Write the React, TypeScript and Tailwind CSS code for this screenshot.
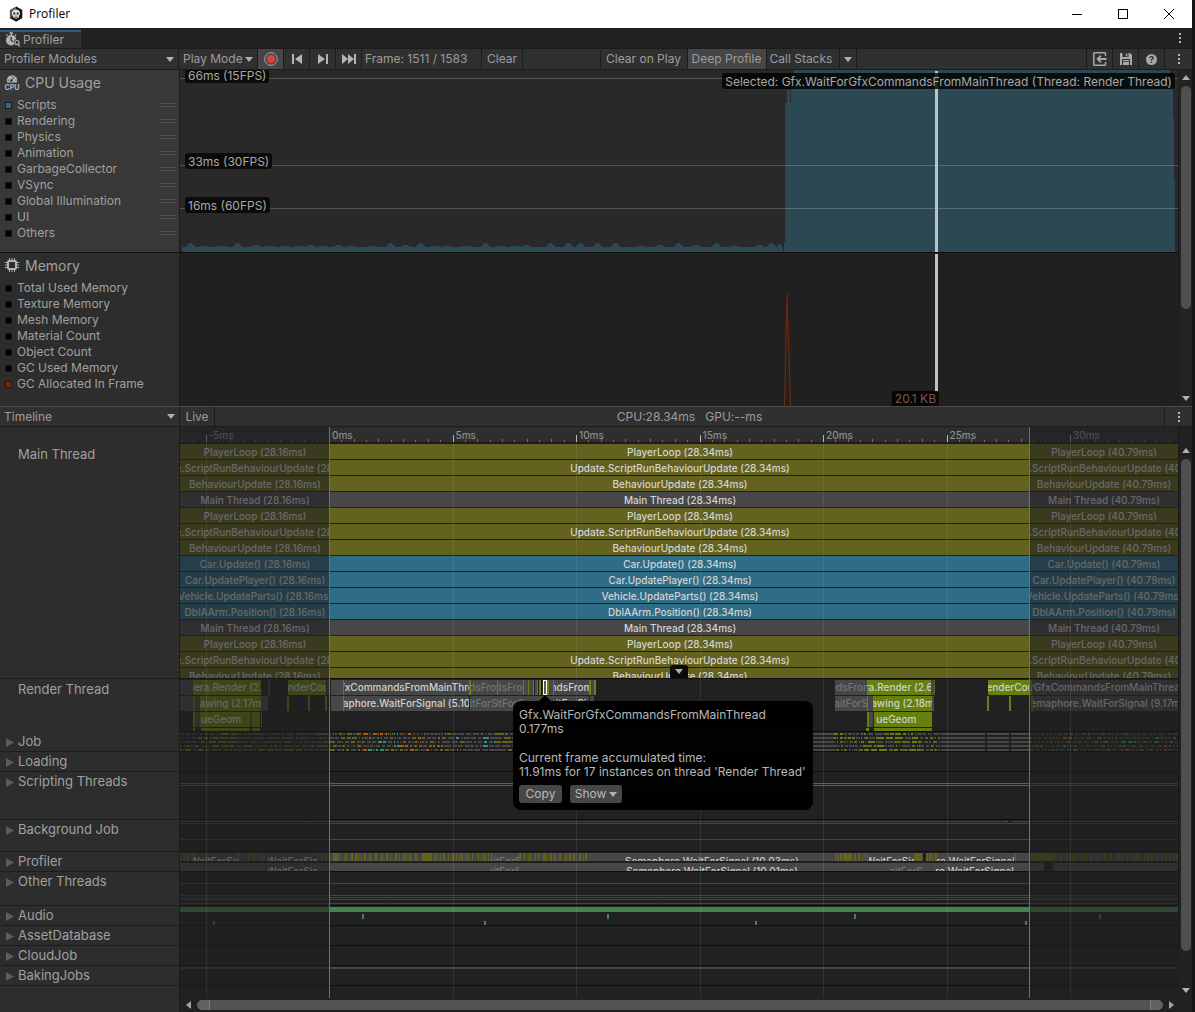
import React, { useState } from "react";

const TRACK_START = 180;
const TRACK_WIDTH = 998;
const FRAME_START = 329;
const FRAME_END = 1029;
const MS = 24.7;

const pct = (x: number) => `${((x - TRACK_START) / TRACK_WIDTH) * 100}%`;
const span = (from: number, to: number) => `${((to - from) / TRACK_WIDTH) * 100}%`;

const C = {
  olive: "#63621f",
  green: "#66800f",
  grey: "#474747",
  blue: "#2f6d87",
  orange: "#a85a14",
  teal: "#3c8a94",
  mint: "#2a9a62",
  audio: "#45834f",
  red: "#8a1838",
};

const cpuItems = ["Scripts", "Rendering", "Physics", "Animation", "GarbageCollector", "VSync", "Global Illumination", "UI", "Others"];
const memoryItems = ["Total Used Memory", "Texture Memory", "Mesh Memory", "Material Count", "Object Count", "GC Used Memory", "GC Allocated In Frame"];

const mainRows = [
  { name: "PlayerLoop", cls: "bg-[#63621f]" },
  { name: "Update.ScriptRunBehaviourUpdate", cls: "bg-[#63621f]" },
  { name: "BehaviourUpdate", cls: "bg-[#63621f]" },
  { name: "Main Thread", cls: "bg-[#474747]" },
  { name: "PlayerLoop", cls: "bg-[#63621f]" },
  { name: "Update.ScriptRunBehaviourUpdate", cls: "bg-[#63621f]" },
  { name: "BehaviourUpdate", cls: "bg-[#63621f]" },
  { name: "Car.Update()", cls: "bg-[#2f6d87]" },
  { name: "Car.UpdatePlayer()", cls: "bg-[#2f6d87]" },
  { name: "Vehicle.UpdateParts()", cls: "bg-[#2f6d87]" },
  { name: "DblAArm.Position()", cls: "bg-[#2f6d87]" },
  { name: "Main Thread", cls: "bg-[#474747]" },
  { name: "PlayerLoop", cls: "bg-[#63621f]" },
  { name: "Update.ScriptRunBehaviourUpdate", cls: "bg-[#63621f]" },
  { name: "BehaviourUpdate", cls: "bg-[#63621f]" },
];

interface Sample {
  from: number;
  to: number;
  color: string;
  label?: string;
  faded?: boolean;
}

const renderRows: Sample[][] = [
  [
    { from: 180, to: 193, color: C.grey },
    { from: 193, to: 261, color: C.green, label: "Camera.Render (2.77m" },
    { from: 268, to: 270, color: C.grey },
    { from: 288, to: 326, color: C.green, label: "RenderCount" },
    { from: 327, to: 329, color: C.grey },
    { from: 331, to: 343, color: C.grey },
    { from: 343, to: 344, color: C.green },
    { from: 344, to: 469, color: C.grey, label: "GfxCommandsFromMainThrea" },
    { from: 469, to: 471, color: C.green },
    { from: 471, to: 497, color: C.grey, label: "ndsFrom", faded: true },
    { from: 497, to: 498, color: C.green },
    { from: 498, to: 523, color: C.grey, label: "ndsFrom", faded: true },
    { from: 523, to: 524, color: C.green },
    { from: 524, to: 528, color: C.grey },
    { from: 528, to: 529, color: C.green },
    { from: 529, to: 533, color: C.grey },
    { from: 533, to: 534, color: C.green },
    { from: 535, to: 537, color: C.grey },
    { from: 537, to: 538, color: C.green },
    { from: 539, to: 541, color: C.green },
    { from: 547, to: 549, color: C.green },
    { from: 549, to: 553, color: C.grey },
    { from: 553, to: 554, color: C.green },
    { from: 554, to: 589, color: C.grey, label: "ndsFrom" },
    { from: 589, to: 591, color: C.green },
    { from: 591, to: 594, color: C.grey },
    { from: 594, to: 596, color: C.green },
    { from: 835, to: 867, color: C.grey, label: "ndsFrom", faded: true },
    { from: 867, to: 931, color: C.green, label: "era.Render (2.66" },
    { from: 931, to: 934, color: C.grey },
    { from: 934, to: 935, color: C.olive },
    { from: 988, to: 1032, color: C.green, label: "enderCou" },
    { from: 1032, to: 1178, color: C.grey, label: "orGfxCommandsFromMainThread" },
  ],
  [
    { from: 180, to: 193, color: C.grey },
    { from: 193, to: 195, color: C.green },
    { from: 195, to: 200, color: C.grey },
    { from: 200, to: 261, color: C.green, label: "awing (2.17m" },
    { from: 261, to: 268, color: C.grey },
    { from: 287, to: 289, color: C.green },
    { from: 308, to: 310, color: C.green },
    { from: 325, to: 327, color: C.green },
    { from: 331, to: 343, color: C.grey },
    { from: 343, to: 344, color: C.green },
    { from: 344, to: 469, color: C.grey, label: "aphore.WaitForSignal (5.10" },
    { from: 470, to: 497, color: C.grey, label: "itForS", faded: true },
    { from: 497, to: 523, color: C.grey, label: "itForS", faded: true },
    { from: 523, to: 553, color: C.grey },
    { from: 553, to: 589, color: C.grey, label: "itForSi" },
    { from: 590, to: 594, color: C.grey },
    { from: 835, to: 867, color: C.grey, label: "aitForS", faded: true },
    { from: 867, to: 868, color: C.green },
    { from: 868, to: 873, color: C.grey },
    { from: 873, to: 932, color: C.green, label: "awing (2.18m" },
    { from: 932, to: 934, color: C.grey },
    { from: 987, to: 989, color: C.green },
    { from: 1009, to: 1011, color: C.green },
    { from: 1031, to: 1033, color: C.green },
    { from: 1033, to: 1178, color: C.grey, label: "emaphore.WaitForSignal (9.17m" },
  ],
  [
    { from: 193, to: 195, color: C.green },
    { from: 195, to: 200, color: C.grey },
    { from: 200, to: 250, color: C.green, label: "ueGeom   " },
    { from: 250, to: 252, color: C.grey },
    { from: 252, to: 260, color: C.green },
    { from: 261, to: 262, color: C.green },
    { from: 867, to: 869, color: C.green },
    { from: 869, to: 873, color: C.grey },
    { from: 874, to: 932, color: C.green, label: "ueGeom     " },
  ],
  [
    { from: 193, to: 195, color: C.green },
    { from: 201, to: 250, color: C.green },
    { from: 252, to: 260, color: C.green },
    { from: 866, to: 869, color: C.green },
    { from: 874, to: 932, color: C.green },
  ],
];

// small seeded generator so that the packed worker samples are stable between renders
function seeded(seed: number) {
  let s = seed;
  return () => {
    s = (s * 16807) % 2147483647;
    return s / 2147483647;
  };
}

function pick(r: number, list: string[]) {
  return list[Math.floor(r * list.length)];
}

function jobSamples(row: number) {
  const rnd = seeded(row * 7919 + 131);
  const out: Sample[] = [];
  const busy = (from: number, to: number, colors: string[], max: number) => {
    let x = from;
    while (x < to) {
      const w = 1 + Math.floor(rnd() * max);
      out.push({ from: x, to: Math.min(x + w, to), color: pick(rnd(), colors) });
      x += w + 1 + Math.floor(rnd() * 2);
    }
  };
  busy(180, 213, [C.grey, C.green, C.grey], 5);
  busy(213, 236, [C.green, C.olive, C.grey], 10);
  busy(236, 329, [C.grey, C.grey, C.grey, C.olive], 14);
  busy(330, 364, [C.grey, C.olive, C.olive, C.grey], 5);
  busy(364, 400, [C.grey, C.olive, C.orange, C.grey, C.grey, C.mint], 4);
  busy(400, 445, [C.grey, C.olive, C.orange, C.grey, C.grey], 4);
  busy(445, 495, [C.grey, C.grey, C.olive, C.grey, C.grey, C.teal], 6);
  busy(495, 520, [C.grey, C.olive], 12);
  out.push({ from: 520, to: 834, color: C.grey });
  busy(834, 865, [C.grey, C.olive, C.green, C.grey], 4);
  busy(865, 920, [C.green, C.green, C.grey, C.olive], 8);
  busy(920, 940, [C.grey, C.olive], 4);
  out.push({ from: 941, to: 985, color: C.grey });
  out.push({ from: 987, to: 1009, color: C.grey });
  out.push({ from: 1011, to: 1029, color: C.grey });
  busy(1030, 1060, [C.grey, C.olive, C.grey], 4);
  busy(1060, 1178, [C.grey, C.grey, C.olive, C.orange, C.grey, C.grey, C.mint], 5);
  return out;
}

function profilerSamples() {
  const rnd = seeded(4242);
  const out: Sample[] = [];
  const stripes = (from: number, to: number, gap: number) => {
    let x = from;
    while (x < to) {
      const w = 1 + Math.floor(rnd() * 2);
      out.push({ from: x, to: x + w, color: C.olive });
      x += w + 1 + Math.floor(rnd() * gap);
    }
  };
  stripes(180, 196, 3);
  stripes(238, 270, 8);
  stripes(316, 329, 5);
  out.push({ from: 333, to: 338, color: C.olive });
  stripes(339, 420, 4);
  out.push({ from: 422, to: 432, color: C.olive });
  stripes(434, 474, 3);
  stripes(478, 492, 4);
  stripes(519, 590, 4);
  stripes(835, 844, 2);
  out.push({ from: 845, to: 852, color: C.olive });
  stripes(854, 868, 2);
  out.push({ from: 914, to: 922, color: C.olive });
  stripes(926, 938, 2);
  out.push({ from: 1015, to: 1016, color: C.olive });
  out.push({ from: 1031, to: 1055, color: C.olive });
  stripes(1057, 1178, 5);
  return out;
}

// area outline of the low CPU frames before the spike
function cpuOutline() {
  const rnd = seeded(97);
  let d = "M182 182 L182 177";
  for (let x = 183; x < 768; ) {
    const flat = 2 + Math.floor(rnd() * 8);
    d += ` L${x + flat} 177`;
    x += flat;
    const r = rnd();
    if (r > 0.2) {
      const h = r > 0.75 ? 4 : r > 0.5 ? 2 : 1;
      d += ` L${x + 1} 176 L${x + 4} ${177 - h} L${x + 6} ${177 - h} L${x + 9} 176 L${x + 10} 177`;
      x += 10;
    }
  }
  return d + " L780 173 L783 178 L783 182 Z";
}

function Kebab() {
  return (
    <svg viewBox="0 0 4 12" className="w-1 h-3" fill="#b4b4b4" shapeRendering="crispEdges">
      <rect x="1" y="1" width="2" height="2" />
      <rect x="1" y="5" width="2" height="2" />
      <rect x="1" y="9" width="2" height="2" />
    </svg>
  );
}

function Caret() {
  return (
    <svg viewBox="0 0 8 5" className="w-2 h-[5px] shrink-0" fill="#b0b0b0">
      <path d="M0 0h8L4 5z" />
    </svg>
  );
}

function UnityLogo() {
  return (
    <svg viewBox="0 0 16 16" className="w-4 h-4">
      <path d="M8 .6l6.2 3.5v7.8L8 15.4l-6.2-3.5V4.1z" fill="#5a5a5a" />
      <path d="M8 .6l6.2 3.5v7.8L8 15.400V8z" fill="#151515" />
      <path d="M1.8 11.9L8 8.5l6.2 3.4L8 15.4z" fill="#1c1c1c" />
      <path d="M8 3.400c2.500 0 4 1.500 4 3.800 0 1.400-.5 2.200-1.200 2.800v1.500L8 12.800l-2.800-1.300V10C4.500 9.400 4 8.600 4 7.200c0-2.300 1.500-3.800 4-3.800z" fill="#dcdcdc" />
      <circle cx="6.300" cy="7.600" r="1.100" fill="#222" />
      <circle cx="9.700" cy="7.600" r="1.100" fill="#222" />
      <path d="M8 9l.8 1.400H7.200zM6.600 11h2.800v.7H6.600z" fill="#333" />
    </svg>
  );
}

function ProfilerIcon() {
  return (
    <svg viewBox="0 0 16 16" className="w-4 h-4" fill="none">
      <path d="M4.500 1h3.500M6.200 1v2" stroke="#b4b4b4" strokeWidth="1.600" />
      <path d="M1.300 3.600l1.200-1.200M11.200 3.600L10 2.400" stroke="#b4b4b4" strokeWidth="1.400" />
      <path d="M6.200 3a5.200 5.200 0 1 0 3.200 9.300 3.400 3.400 0 0 1 1.900-5.200A5.200 5.200 0 0 0 6.200 3z" fill="#b4b4b4" />
      <path d="M6.200 5v3.500l2 1.300" stroke="#303030" strokeWidth="1.300" />
      <circle cx="12" cy="10.500" r="2" stroke="#b4b4b4" strokeWidth="1.200" />
      <path d="M13.200 12l1.500 2.600" stroke="#b4b4b4" strokeWidth="1.200" />
    </svg>
  );
}

function CpuIcon() {
  return (
    <svg viewBox="0 0 16 16" className="w-4 h-4">
      <path d="M3.300 8.500A5.200 5.200 0 1 1 12.800 8.500z" fill="#b4b4b4" />
      <path d="M7.200 6.600L10.600 3M3.800 6.200h1.200M8 2.200v1M11.500 6.200h1" stroke="#383838" strokeWidth="1" />
      <circle cx="7.400" cy="6.600" r="1.300" fill="#383838" />
      <text x="8" y="15.500" textAnchor="middle" fontSize="7" fontWeight="700" fill="#b4b4b4" fontFamily="Inter, sans-serif">CPU</text>
    </svg>
  );
}

function MemoryIcon() {
  return (
    <svg viewBox="0 0 14 14" className="w-[14px] h-[14px]" fill="none" stroke="#b4b4b4">
      <rect x="3" y="3" width="8" height="8" rx="1" strokeWidth="2" />
      <path d="M4.500 0v2M7 0v2M9.500 0v2M4.500 12v2M7 12v2M9.500 12v2M0 4.500h2M0 7h2M0 9.500h2M12 4.500h2M12 7h2M12 9.500h2" />
    </svg>
  );
}

function Dropdown({ label, options, className }: { label: string; options: string[]; className: string }) {
  return (
    <label className={`relative flex items-center ${className}`}>
      <select aria-label={label} className="w-full h-full pl-1 appearance-none bg-transparent outline-none cursor-pointer">
        {options.map((o) => (
          <option key={o}>{o}</option>
        ))}
      </select>
      <span className="absolute right-1 pointer-events-none">
        <Caret />
      </span>
    </label>
  );
}

function Toolbar() {
  const [recording, setRecording] = useState(true);
  const [deep, setDeep] = useState(true);

  return (
    <div className="flex h-[22px] border-y border-[#1c1c1c] bg-[#303030] text-[#9c9c9c]">
      <Dropdown label="Profiler Modules" options={["Profiler Modules"]} className="w-[178px] shrink-0" />
      <Dropdown label="Target" options={["Play Mode", "Edit Mode"]} className="w-[79px] shrink-0 border-l border-[#1c1c1c]" />
      <button
        aria-label="Record"
        onClick={() => setRecording(!recording)}
        className={`w-[26px] shrink-0 flex items-center justify-center border-l border-[#1c1c1c] ${recording ? "bg-[#464646]" : ""}`}
      >
        <svg viewBox="0 0 14 14" className="w-[14px] h-[14px]">
          <circle cx="7" cy="7" r="6.300" fill="none" stroke="#a5a5a5" />
          <circle cx="7" cy="7" r="4.200" fill="#d8433b" />
        </svg>
      </button>
      <button aria-label="Previous frame" className="w-[26px] shrink-0 flex items-center justify-center border-l border-[#1c1c1c]">
        <svg viewBox="0 0 10 10" className="w-[10px] h-[10px]" fill="#b4b4b4">
          <path d="M0 0h2v10H0zM10 0v10L3 5z" />
        </svg>
      </button>
      <button aria-label="Next frame" className="w-[26px] shrink-0 flex items-center justify-center border-l border-[#1c1c1c]">
        <svg viewBox="0 0 10 10" className="w-[10px] h-[10px]" fill="#b4b4b4">
          <path d="M8 0h2v10H8zM0 0v10l7-5z" />
        </svg>
      </button>
      <button aria-label="Current frame" className="w-[26px] shrink-0 flex items-center justify-center border-l border-[#1c1c1c]">
        <svg viewBox="0 0 14 10" className="w-[14px] h-[10px]" fill="#b4b4b4">
          <path d="M12 0h2v10h-2zM0 0v10l6-5zM6 0v10l6-5z" />
        </svg>
      </button>
      <span className="w-[120px] shrink-0 flex items-center pl-[3px] border-l border-[#1c1c1c] whitespace-nowrap">Frame: 1511 / 1583</span>
      <button className="w-[42px] shrink-0 border-x border-[#1c1c1c]">Clear</button>
      <div className="flex-1" />
      <button className="w-[87px] shrink-0 border-l border-[#1c1c1c] whitespace-nowrap">Clear on Play</button>
      <button
        onClick={() => setDeep(!deep)}
        className={`w-[80px] shrink-0 border-x border-[#1c1c1c] whitespace-nowrap ${deep ? "bg-[#464646]" : ""}`}
      >
        Deep Profile
      </button>
      <button className="w-[72px] shrink-0 pl-[3px] text-left whitespace-nowrap">Call Stacks</button>
      <button aria-label="Call stack options" className="w-[18px] shrink-0 flex items-center justify-center border-x border-[#1c1c1c]">
        <Caret />
      </button>
      <div className="flex-[3]" />
      <button aria-label="Load" className="w-[26px] shrink-0 flex items-center justify-center border-l border-[#1c1c1c]">
        <svg viewBox="0 0 14 14" className="w-[14px] h-[14px]" fill="none" stroke="#a8a8a8" strokeWidth="1.500">
          <path d="M12.500 4V1.500a.8.8 0 0 0-.8-.8H1.600a.8.8 0 0 0-.8.8v11c0 .4.300.8.8.8h10.100c.4 0 .8-.4.8-.8V10" />
          <path d="M13.500 7H5M8 3.600L4.600 7 8 10.400" strokeWidth="1.800" />
        </svg>
      </button>
      <button aria-label="Save" className="w-[26px] shrink-0 flex items-center justify-center border-l border-[#1c1c1c]">
        <svg viewBox="0 0 12 12" className="w-3 h-3">
          <path d="M0 0h10l2 2v10H0z" fill="#a8a8a8" />
          <path d="M2.500 0h6v4h-6z" fill="#303030" />
          <path d="M5.800 .5h1.600v2.800H5.800z" fill="#a8a8a8" />
          <path d="M2 6h8v6H2z" fill="#303030" />
          <path d="M3 7h6v1.200H3zM3 9h6v3H3z" fill="#a8a8a8" />
        </svg>
      </button>
      <button aria-label="Help" className="w-[26px] shrink-0 flex items-center justify-center border-l border-[#1c1c1c]">
        <span className="w-[11px] h-[11px] rounded-full bg-[#a8a8a8] text-[#303030] text-[9px] leading-[11px] font-bold text-center">?</span>
      </button>
      <button aria-label="More" className="w-7 shrink-0 flex items-center justify-center border-l border-[#1c1c1c]">
        <Kebab />
      </button>
    </div>
  );
}

function Legend({ items, active, swatch, handles }: { items: string[]; active: string; swatch: string; handles?: boolean }) {
  return (
    <ul className="pt-[3px]">
      {items.map((item) => (
        <li key={item} className="flex items-center h-4 pl-[5px] pr-1">
          <label className="flex flex-1 items-center gap-[5px] whitespace-nowrap">
            <input
              type="checkbox"
              defaultChecked={item === active}
              className={`appearance-none w-[7px] h-[7px] border border-[#1a1a1a] bg-black ${swatch}`}
            />
            {item}
          </label>
          {handles && <span className="w-[14px] h-1 border-y border-[#525252]" />}
        </li>
      ))}
    </ul>
  );
}

function GuideLabel({ children, className }: { children: React.ReactNode; className: string }) {
  return (
    <span className={`absolute px-[3px] h-4 leading-[17px] rounded-[3px] bg-[#0b0b0b] text-[#a8a8a8] whitespace-nowrap ${className}`}>
      {children}
    </span>
  );
}

function Modules() {
  return (
    <div className="flex border-b border-[#4a4a4a]">
      <div className="flex-1 min-w-0">
        <section className="flex h-[183px] border-b border-[#0e0e0e]">
          <div className="w-[180px] shrink-0 bg-[#383838] border-r border-[#1c1c1c] text-[#a0a0a0]">
            <h2 className="flex items-center gap-[5px] h-6 pl-1 text-[14px]">
              <CpuIcon />
              CPU Usage
            </h2>
            <Legend items={cpuItems} active="Scripts" swatch="checked:bg-[#2f6d87]" handles />
          </div>
          <div className="relative flex-1 overflow-hidden bg-[#292929]">
            <svg viewBox="180 0 998 182" preserveAspectRatio="none" className="block w-full h-[182px]">
              <path d={cpuOutline()} fill="#2c4953" shapeRendering="crispEdges" />
              <path
                d="M784 182V172H785V33H787V20H790V33H791V16H794V0H1170V14H1173V48H1174V110H1175V182Z"
                fill="#2c4953"
                shapeRendering="crispEdges"
              />
              <path d="M180 8.500h998M180 95.500h998M180 138.500h998" stroke="#fff" strokeOpacity="0.2" />
              <rect x="935" y="1" width="3" height="181" fill="#b8c4c8" />
            </svg>
            <GuideLabel className="left-[5px] -top-[3px]">66ms (15FPS)</GuideLabel>
            <GuideLabel className="left-[5px] top-[83px]">33ms (30FPS)</GuideLabel>
            <GuideLabel className="left-[5px] top-[127px]">16ms (60FPS)</GuideLabel>
            <span className="absolute right-[3px] top-[3px] px-[3px] h-4 leading-[17px] rounded-[3px] bg-black/80 text-[#a8a8a8] whitespace-nowrap">
              Selected: Gfx.WaitForGfxCommandsFromMainThread (Thread: Render Thread)
            </span>
          </div>
        </section>
        <section className="flex h-[153px]">
          <div className="w-[180px] shrink-0 bg-[#2d2d2d] border-r border-[#1c1c1c] text-[#a0a0a0]">
            <h2 className="flex items-center gap-[6px] h-6 pl-[5px] text-[14px]">
              <MemoryIcon />
              Memory
            </h2>
            <Legend items={memoryItems} active="GC Allocated In Frame" swatch="checked:bg-[#7a2408]" />
          </div>
          <div className="relative flex-1 overflow-hidden bg-[#202020]">
            <svg viewBox="180 0 998 153" preserveAspectRatio="none" className="block w-full h-[153px]">
              <path d="M784.500 153L787 41L790.500 153" fill="none" stroke="#6b2712" strokeWidth="1.200" />
              <rect x="935" y="1" width="3" height="138" fill="#c0c0c0" />
              <rect x="935" y="138" width="3" height="15" fill="#333" />
            </svg>
            <span
              className="absolute bottom-0 px-[3px] h-[15px] leading-[15px] -translate-x-full rounded-t-[3px] bg-black/80 text-[#7a564c] whitespace-nowrap"
              style={{ left: pct(939) }}
            >
              20.1 KB
            </span>
          </div>
        </section>
      </div>
      <div className="w-[14px] shrink-0 flex flex-col items-center bg-[#232323] border-l border-[#1c1c1c]">
        <span className="h-4 flex items-center rotate-180">
          <Caret />
        </span>
        <span className="w-[10px] h-[223px] rounded-full bg-[#4f4f4f]" />
        <span className="mt-auto h-4 flex items-center">
          <Caret />
        </span>
      </div>
    </div>
  );
}

function ThreadRow({ name, height, foldout, noBorder, children }: { name: string; height: string; foldout?: boolean; noBorder?: boolean; children?: React.ReactNode }) {
  return (
    <div className={`flex ${height}`}>
      <div className={`w-[180px] shrink-0 border-r border-[#1c1c1c] bg-[#2d2d2d] text-[13px] text-[#a0a0a0] ${noBorder ? "" : "border-b"}`}>
        {foldout ? (
          <button className="flex items-center gap-1 h-5 pl-[6px]">
            <svg viewBox="0 0 8 9" className="w-2 h-[9px]" fill="#5c5c5c">
              <path d="M0 0v9l8-4.500z" />
            </svg>
            {name}
          </button>
        ) : (
          <div className="h-5 leading-5 pl-[18px]">{name}</div>
        )}
      </div>
      <div className="relative flex-1 overflow-hidden border-b border-[#0e0e0e]">{children}</div>
    </div>
  );
}

function Lane({ samples }: { samples: Sample[] }) {
  return (
    <div className="relative h-4 overflow-hidden">
      {samples.map((s) => (
        <div
          key={s.from}
          className={`absolute top-0 h-[15px] flex items-center justify-center overflow-hidden whitespace-pre ${s.faded ? "text-[#747474]" : "text-[#d0d0d0]"}`}
          style={{ left: pct(s.from), width: span(s.from, s.to), backgroundColor: s.color }}
        >
          {s.label}
        </div>
      ))}
    </div>
  );
}

function Strip({ height, cls, children }: { height: number; cls: string; children: React.ReactNode }) {
  return (
    <svg viewBox={`180 0 998 ${height}`} preserveAspectRatio="none" shapeRendering="crispEdges" className={`block w-full ${cls}`}>
      {children}
    </svg>
  );
}

function Hairlines({ ys, color = "#444" }: { ys: number[]; color?: string }) {
  return (
    <>
      {ys.map((y) => (
        <rect key={y} x="180" y={y} width="998" height="1" fill={color} />
      ))}
    </>
  );
}

function Ruler() {
  const ticks: React.ReactNode[] = [];
  for (let i = -12; i < 69; i++) {
    const x = FRAME_START + (i * MS) / 2;
    if (x < 180) continue;
    const h = i % 10 === 0 ? 7 : i % 2 === 0 ? 3 : 2;
    ticks.push(<rect key={i} x={Math.round(x)} y={15 - h} width="1" height={h} fill={i % 10 === 0 ? "#b8b8b8" : "#707070"} />);
  }
  return (
    <div className="flex h-[17px]">
      <div className="w-[180px] shrink-0 border-r border-[#1c1c1c] bg-[#2d2d2d]" />
      <div className="relative flex-1 overflow-hidden bg-[#2e2e2e] border-b-2 border-[#1c1c1c] text-[10px] font-medium leading-4 text-[#8c8c8c]">
        <Strip height={15} cls="h-[15px]">{ticks}</Strip>
        {[-5, 0, 5, 10, 15, 20, 25, 30].map((ms) => (
          <span key={ms} className="absolute top-0 pl-[3px]" style={{ left: pct(FRAME_START + ms * MS) }}>
            {ms}ms
          </span>
        ))}
      </div>
    </div>
  );
}

function MainLanes() {
  const cell = "flex justify-center overflow-hidden whitespace-nowrap";
  return (
    <>
      {mainRows.map((row, i) => (
        <div key={i} className="grid grid-cols-[150fr_700fr_148fr] h-4 border-b border-[#202020] text-[10px] font-medium leading-4 text-[#d4d4d4]">
          <span className={`${cell} ${row.cls}`}>{row.name} (28.16ms)</span>
          <span className={`${cell} ${row.cls}`}>{row.name} (28.34ms)</span>
          <span className={`${cell} ${row.cls}`}>{row.name} (40.79ms)</span>
        </div>
      ))}
      <button
        aria-label="Expand thread"
        className="absolute left-1/2 bottom-0 z-10 -translate-x-1/2 w-[18px] h-[13px] flex items-center justify-center rounded-t-[3px] bg-[#0a0a0a]"
      >
        <Caret />
      </button>
    </>
  );
}

function WaitLabel({ from, to, faded, children }: { from: number; to: number; faded?: boolean; children: React.ReactNode }) {
  return (
    <span
      className={`absolute top-0 flex justify-center overflow-hidden whitespace-nowrap leading-4 ${faded ? "text-[#747474]" : "text-[#c8c8c8]"}`}
      style={{ left: pct(from), width: span(from, to) }}
    >
      {children}
    </span>
  );
}

function ProfilerLanes() {
  return (
    <div className="text-[10px] font-medium">
      <div className="relative mt-px h-2 overflow-hidden">
        <Strip height={8} cls="h-2">
          <rect x="180" y="0" width="849" height="8" fill={C.grey} />
          <rect x="1030" y="0" width="148" height="8" fill={C.grey} />
          {profilerSamples().map((s) => (
            <rect key={s.from} x={s.from} y="0" width={s.to - s.from} height="8" fill={s.color} />
          ))}
          <rect x="923" y="0" width="3" height="8" fill="#212121" />
        </Strip>
        <WaitLabel from={193} to={238}>WaitForSig</WaitLabel>
        <WaitLabel from={268} to={317}>WaitForSig</WaitLabel>
        <WaitLabel from={490} to={519} faded>aitForS</WaitLabel>
        <WaitLabel from={592} to={832}>Semaphore.WaitForSignal (10.03ms)</WaitLabel>
        <WaitLabel from={868} to={914}>WaitForSig</WaitLabel>
        <WaitLabel from={937} to={1014}>re.WaitForSignal</WaitLabel>
      </div>
      <div className="relative mt-[2px] h-2 overflow-hidden">
        <Strip height={8} cls="h-2">
          <rect x="180" y="0" width="864" height="8" fill={C.grey} />
          <rect x="1053" y="0" width="125" height="8" fill={C.grey} />
        </Strip>
        <WaitLabel from={268} to={317}>WaitForSig</WaitLabel>
        <WaitLabel from={490} to={519} faded>aitForS</WaitLabel>
        <WaitLabel from={592} to={832}>Semaphore.WaitForSignal (10.01ms)</WaitLabel>
        <WaitLabel from={890} to={922} faded>aitForS</WaitLabel>
        <WaitLabel from={935} to={1014}>re.WaitForSignal</WaitLabel>
      </div>
    </div>
  );
}

function SampleTooltip() {
  return (
    <div className="absolute z-30 top-[274px] -translate-x-8 w-[300px] h-[109px] rounded-lg bg-black/95 pt-[7px] px-[6px] text-[#b8b8b8] leading-[14px] whitespace-nowrap" style={{ left: pct(545) }}>
      <svg viewBox="0 0 12 6" className="absolute -top-[6px] left-[26px] w-3 h-[6px]">
        <path d="M6 0l6 6H0z" fill="#000" />
      </svg>
      <p>Gfx.WaitForGfxCommandsFromMainThread</p>
      <p>0.177ms</p>
      <p className="mt-[15px]">Current frame accumulated time:</p>
      <p>11.91ms for 17 instances on thread 'Render Thread'</p>
      <div className="flex gap-2 mt-[6px]">
        <button className="w-[43px] h-[18px] rounded-[3px] bg-[#474747]">Copy</button>
        <button className="w-[52px] h-[18px] rounded-[3px] bg-[#474747] flex items-center justify-center gap-[3px]">
          Show
          <Caret />
        </button>
      </div>
    </div>
  );
}

function TimelineOverlay() {
  const guides = [-5, 5, 10, 15, 20, 25, 30];
  return (
    <div className="absolute inset-y-0 left-[180px] right-0 pointer-events-none">
      <div className="absolute inset-y-0 left-0 bg-[#202020]/60" style={{ width: span(TRACK_START, FRAME_START) }} />
      <div className="absolute inset-y-0 right-0 bg-[#202020]/60" style={{ left: pct(FRAME_END) }} />
      {guides.map((ms) => (
        <div key={ms} className="absolute top-[15px] bottom-0 w-px bg-white/8" style={{ left: pct(FRAME_START + ms * MS) }} />
      ))}
      <div className="absolute inset-y-0 w-px bg-[#707070]" style={{ left: pct(FRAME_START) }} />
      <div className="absolute inset-y-0 w-px bg-[#707070]" style={{ left: pct(FRAME_END) }} />
      <div
        className="absolute top-[253px] h-[15px] border border-white bg-[#5a5a5a]"
        style={{ left: pct(543), width: span(543, 547) }}
      />
      <SampleTooltip />
    </div>
  );
}

function Timeline() {
  return (
    <div className="flex bg-[#212121]">
      <div className="flex-1 min-w-0">
        <div className="relative">
          <Ruler />
          <ThreadRow name="Main Thread" height="h-[235px]">
            <MainLanes />
          </ThreadRow>
          <ThreadRow name="Render Thread" height="h-[53px]" noBorder>
            <div className="pt-px text-[10px] font-medium">
              {renderRows.map((samples, i) => (
                <Lane key={i} samples={samples} />
              ))}
            </div>
          </ThreadRow>
          <ThreadRow name="Job" height="h-5" foldout>
            <Strip height={19} cls="h-[19px]">
              {[1, 5, 9, 13, 17].map((y, row) =>
                jobSamples(row + 1).map((s) => (
                  <rect key={`${y}-${s.from}`} x={s.from} y={y} width={s.to - s.from} height="2" fill={s.color} />
                ))
              )}
            </Strip>
          </ThreadRow>
          <ThreadRow name="Loading" height="h-5" foldout />
          <ThreadRow name="Scripting Threads" height="h-12" foldout>
            <Strip height={47} cls="h-[47px]">
              <Hairlines ys={[11, 13]} color="#2f6d87" />
            </Strip>
          </ThreadRow>
          <ThreadRow name="Background Job" height="h-8" foldout>
            <Strip height={31} cls="h-[31px]">
              <Hairlines ys={[1, 3, 19]} />
              <rect x="306" y="1" width="3" height="1" fill={C.olive} />
              <rect x="1006" y="1" width="2" height="1" fill={C.olive} />
              <rect x="1008" y="1" width="4" height="1" fill="#212121" />
            </Strip>
          </ThreadRow>
          <ThreadRow name="Profiler" height="h-5" foldout>
            <ProfilerLanes />
          </ThreadRow>
          <ThreadRow name="Other Threads" height="h-[34px]" foldout>
            <Strip height={33} cls="h-[33px]">
              <Hairlines ys={[11, 23, 25, 27, 31]} />
              <rect x="386" y="31" width="5" height="1" fill={C.red} />
              <rect x="659" y="31" width="5" height="1" fill={C.red} />
              <rect x="928" y="31" width="4" height="1" fill={C.red} />
            </Strip>
          </ThreadRow>
          <ThreadRow name="Audio" height="h-5" foldout>
            <Strip height={19} cls="h-[19px]">
              <rect x="180" y="1" width="998" height="5" fill={C.audio} />
              {[362, 607, 854, 1099].map((x) => (
                <rect key={x} x={x} y="8" width="2" height="5" fill={C.audio} />
              ))}
              {[213, 484, 755, 1025].map((x) => (
                <rect key={x} x={x} y="15" width="2" height="5" fill={C.audio} />
              ))}
            </Strip>
          </ThreadRow>
          <ThreadRow name="AssetDatabase" height="h-5" foldout />
          <ThreadRow name="CloudJob" height="h-5" foldout />
          <ThreadRow name="BakingJobs" height="h-5" foldout>
            <Strip height={19} cls="h-[19px]">
              <Hairlines ys={[1, 2]} />
            </Strip>
          </ThreadRow>
          <div className="flex h-3">
            <div className="w-[180px] border-r border-[#1c1c1c] bg-[#2d2d2d]" />
          </div>
          <TimelineOverlay />
        </div>
        <div className="flex h-[14px]">
          <div className="w-[180px] shrink-0 border-r border-[#1c1c1c] bg-[#2d2d2d]" />
          <div className="flex-1 flex items-center justify-between pl-[6px] pr-1">
            <svg viewBox="0 0 5 8" className="w-[5px] h-2" fill="#a5a5a5">
              <path d="M5 0v8L0 4z" />
            </svg>
            <div className="flex flex-1 mx-[6px] h-[10px] rounded-full overflow-hidden bg-[#626262]">
              <div className="flex-1 mx-3 border-x border-[#7a7a7a] bg-[#525252]" />
            </div>
            <svg viewBox="0 0 5 8" className="w-[5px] h-2" fill="#a5a5a5">
              <path d="M0 0v8l5-4z" />
            </svg>
          </div>
        </div>
      </div>
      <div className="w-[14px] shrink-0 flex flex-col items-center pt-4 border-l border-[#1c1c1c]">
        <span className="h-4 flex items-center rotate-180">
          <Caret />
        </span>
        <span className="w-[10px] h-[492px] rounded-full bg-[#4f4f4f]" />
        <span className="mt-auto mb-[14px] h-4 flex items-center">
          <Caret />
        </span>
      </div>
    </div>
  );
}

export default function App() {
  return (
    <div className="min-h-screen pr-[3px] bg-[#161616] font-['Inter',sans-serif] text-[12px] select-none">
      {/* Window title bar */}
      <header className="flex items-center h-7 bg-white text-black">
        <div className="flex flex-1 items-center gap-[5px] pl-2">
          <UnityLogo />
          <span className="font-['Open_Sans',sans-serif] text-[12px] leading-4">Profiler</span>
        </div>
        <button aria-label="Minimize" className="w-[46px] h-full flex items-center justify-center">
          <span className="w-[10px] h-px bg-black" />
        </button>
        <button aria-label="Maximize" className="w-[46px] h-full flex items-center justify-center">
          <span className="w-[10px] h-[10px] border border-black" />
        </button>
        <button aria-label="Close" className="w-[46px] h-full flex items-center justify-center">
          <svg viewBox="0 0 10 10" className="w-[10px] h-[10px]" stroke="#000" fill="none">
            <path d="M0 0l10 10M10 0L0 10" />
          </svg>
        </button>
      </header>

      {/* Tab strip */}
      <div className="flex items-end justify-between h-5 bg-[#212121]">
        <div className="flex items-center gap-[2px] w-[81px] h-[18px] pl-[5px] border-t-2 border-[#2c5d87] bg-[#303030] text-[#a0a0a0]">
          <ProfilerIcon />
          Profiler
        </div>
        <button aria-label="Tab menu" className="h-5 w-[25px] flex items-center justify-center">
          <Kebab />
        </button>
      </div>

      <Toolbar />
      <Modules />

      {/* Timeline toolbar */}
      <div className="relative flex h-5 bg-[#303030] border-b border-[#1c1c1c] text-[#9c9c9c]">
        <Dropdown label="View" options={["Timeline", "Hierarchy", "Raw Hierarchy"]} className="w-[179px]" />
        <button className="w-[36px] border-x border-[#1c1c1c] text-center">Live</button>
        <div className="flex-1 flex items-center justify-center">
          <span className="whitespace-pre">CPU:28.34ms   GPU:--ms</span>
        </div>
        <button aria-label="Timeline menu" className="w-7 flex items-center justify-center border-l border-[#1c1c1c]">
          <Kebab />
        </button>
      </div>

      <Timeline />
    </div>
  );
}
